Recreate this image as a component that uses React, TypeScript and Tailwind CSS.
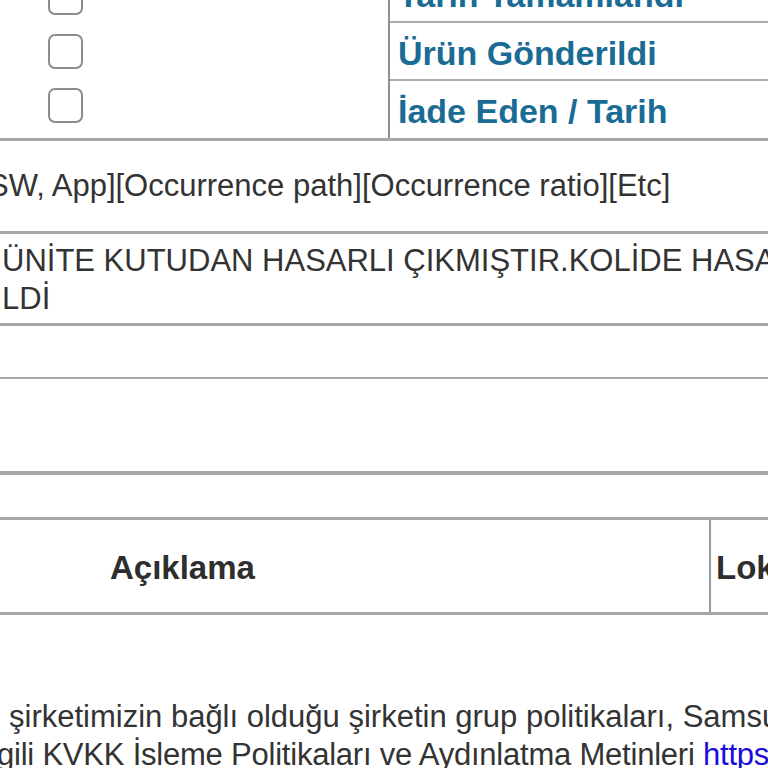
import { useState } from "react";

const rows = ["Tarih Tamamlandı", "Ürün Gönderildi", "İade Eden / Tarih"];

function CheckBox({ checked, onToggle }: { checked: boolean; onToggle: () => void }) {
    return (
        <button
            onClick={onToggle}
            className="w-[35px] h-[35px] rounded-[7px] border-2 border-[#8c8c8c] bg-white flex items-center justify-center"
        >
            {checked && <span className="w-[17px] h-[17px] rounded-[3px] bg-[#1b6d93]" />}
        </button>
    );
}

export default function App() {
    const [checks, setChecks] = useState([false, false, false]);

    const toggle = (i: number) => {
        setChecks(checks.map((c, idx) => (idx === i ? !c : c)));
    };

    return (
        <div className="w-[768px] h-[768px] overflow-hidden bg-white text-[#333] font-['Liberation_Sans',Arial,sans-serif]">
            {/* status block: checkboxes on the left, labels on the right */}
            <div className="flex flex-row mt-[-35px] border-b-[3px] border-[#a6a6a6]">
                <div className="w-[390px] shrink-0 border-r-2 border-[#8f8f8f] flex flex-col gap-[19px] pt-[15px] pl-[48px]">
                    {checks.map((c, i) => (
                        <CheckBox key={i} checked={c} onToggle={() => toggle(i)} />
                    ))}
                </div>
                <div className="flex-1 flex flex-col">
                    {rows.map((r, i) => (
                        <div
                            key={r}
                            className={`flex items-center pl-[8px] pt-[3px] whitespace-nowrap overflow-hidden ${i < rows.length - 1 ? "h-[58px] border-b-2 border-[#ababab]" : "h-[57px]"}`}
                        >
                            <span className="text-[34px] font-bold text-[#1a6c94] leading-none">{r}</span>
                        </div>
                    ))}
                </div>
            </div>

            <div className="h-[93px] flex items-center whitespace-nowrap overflow-hidden border-b-[3px] border-[#a6a6a6]">
                <span className="text-[31px] ml-[-12px]">SW, App][Occurrence path][Occurrence ratio][Etc]</span>
            </div>

            <div className="h-[92px] pt-[8px] flex flex-col text-[31px] leading-[38px] whitespace-nowrap overflow-hidden border-b-[3px] border-[#a6a6a6]">
                <span className="ml-[2px]">ÜNİTE KUTUDAN HASARLI ÇIKMIŞTIR.KOLİDE HASA</span>
                <span className="ml-[2px]">LDİ</span>
            </div>

            <div className="h-[53px] border-b-2 border-[#a6a6a6]" />
            <div className="h-[96px] border-b-4 border-[#a6a6a6]" />

            <div className="h-[42px]" />

            {/* table header */}
            <div className="flex flex-row h-[98px] border-y-[3px] border-[#a6a6a6] whitespace-nowrap overflow-hidden">
                <div className="w-[711px] shrink-0 border-r-2 border-[#9a9a9a] flex items-center pl-[110px] pt-[4px]">
                    <span className="text-[33px] font-bold text-[#2e2e2e]">Açıklama</span>
                </div>
                <div className="flex items-center pl-[5px] pt-[4px]">
                    <span className="text-[33px] font-bold text-[#2e2e2e]">Lokasyon</span>
                </div>
            </div>

            <div className="pt-[83px] text-[31px] leading-[38px] whitespace-nowrap">
                <p className="ml-[9px]">şirketimizin bağlı olduğu şirketin grup politikaları, Samsung</p>
                <p className="ml-[-3px] tracking-[-0.22px]">
                    gili KVKK İsleme Politikaları ve Aydınlatma Metinleri{" "}
                    <a href="#" className="text-[#1a0dd8]">https://www.samsung.com</a>
                </p>
            </div>
        </div>
    );
}
